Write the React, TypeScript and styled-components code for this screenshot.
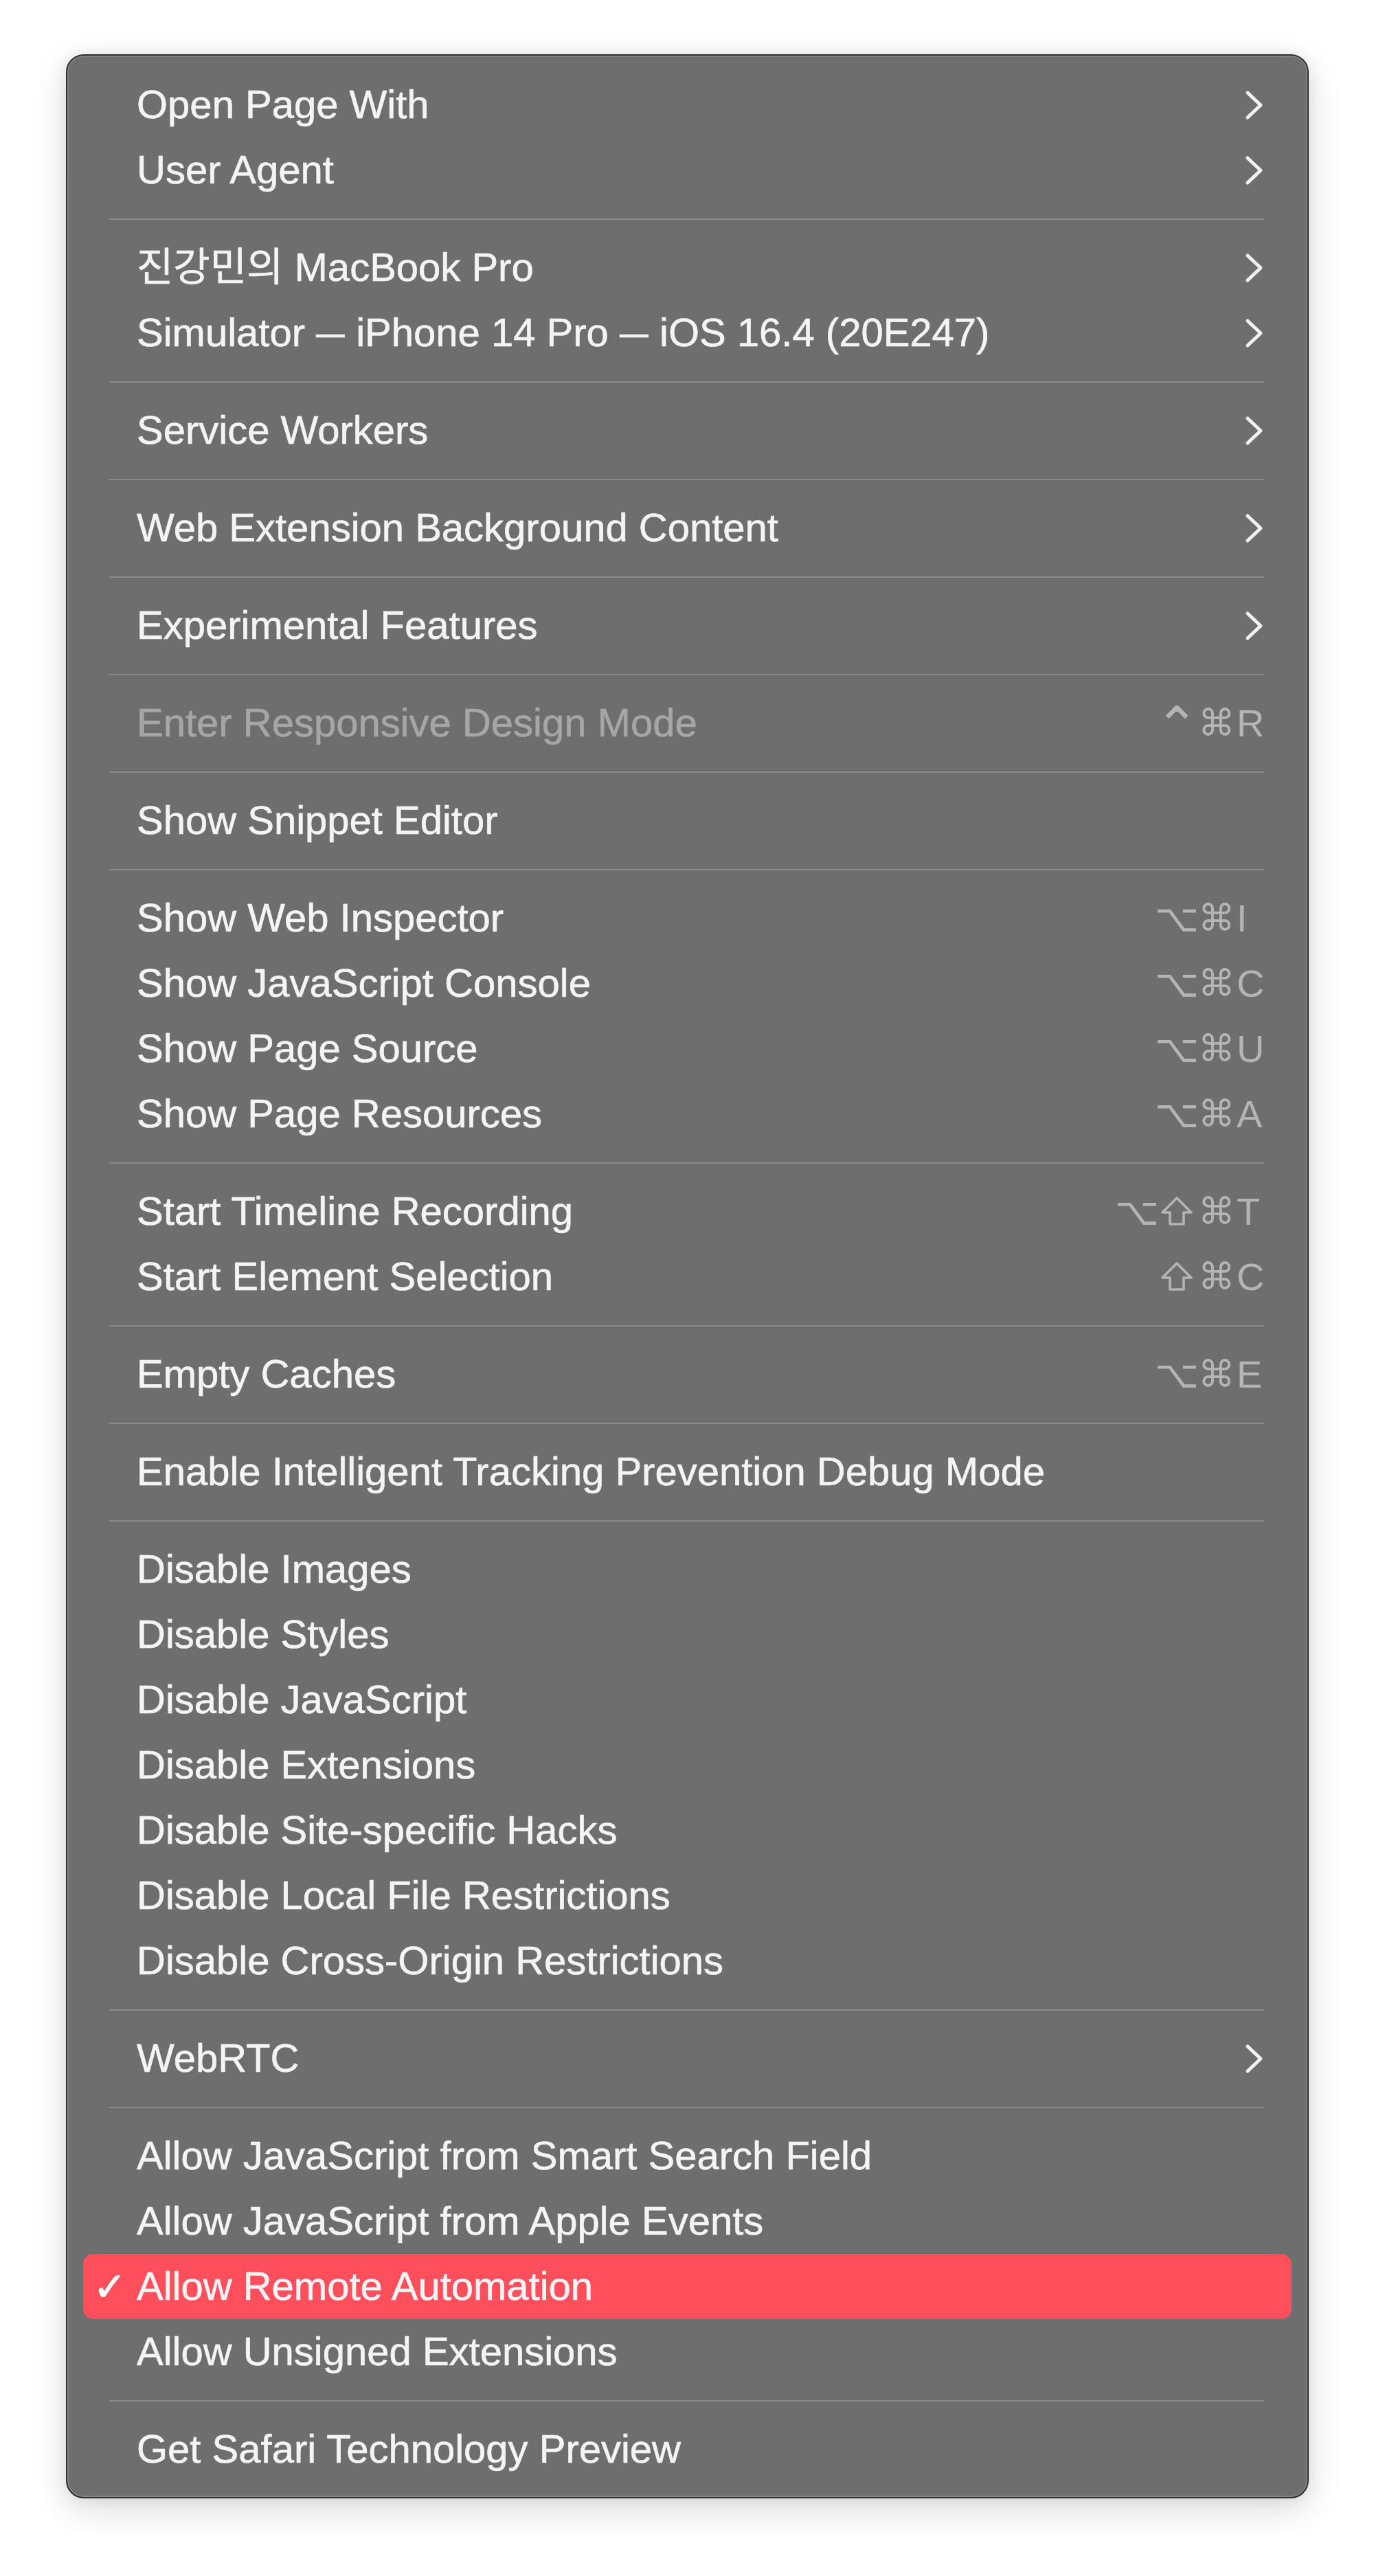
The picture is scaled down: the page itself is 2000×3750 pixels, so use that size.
import React from "react";
import styled, { createGlobalStyle } from "styled-components";

const GlobalStyle = createGlobalStyle`
  html, body {
    margin: 0;
    padding: 0;
    background: #ffffff;
  }
  body {
    font-family: "Liberation Sans", Arial, "Noto Sans CJK KR", sans-serif;
  }
`;

const Page = styled.div`
  padding: 79px 0 0 96px;
  min-height: 3750px;
  box-sizing: border-box;
`;

const Menu = styled.div`
  width: 1809px;
  box-sizing: border-box;
  background: #6e6e6e;
  border: 2px solid #2f2f2f;
  border-radius: 26px;
  padding: 24px 23px 22px;
  box-shadow: inset 0 0 0 1.5px #8b8b8b, 0 16px 50px rgba(0, 0, 0, 0.14),
    0 0 22px rgba(0, 0, 0, 0.07);
  display: flex;
  flex-direction: column;
`;

const Row = styled.div<{ $highlighted?: boolean }>`
  height: 95px;
  display: grid;
  grid-template-columns: 78px 1fr auto;
  align-items: center;
  padding-right: 40px;
  border-radius: 15px;
  background: ${(p) => (p.$highlighted ? "#ff4e5c" : "transparent")};
`;

const CheckCell = styled.span`
  text-align: right;
  padding-right: 15px;
  font-family: "DejaVu Sans", sans-serif;
  font-size: 58px;
  color: #ffffff;
  line-height: 1;
  -webkit-text-stroke: 1px #ffffff;
`;

const Label = styled.span<{ $disabled?: boolean }>`
  font-family: "Liberation Sans", Arial, "Noto Sans CJK KR", sans-serif;
  font-size: 58px;
  line-height: 1.15;
  color: ${(p) => (p.$disabled ? "#a6a6a6" : "#f4f4f4")};
  -webkit-text-stroke: 0.6px ${(p) => (p.$disabled ? "#a6a6a6" : "#f4f4f4")};
  white-space: nowrap;
`;

const Dash = styled.span`
  display: inline-block;
  width: 42px;
  transform: scaleX(0.72);
  transform-origin: left center;
`;

const Shortcut = styled.span`
  display: flex;
  align-items: center;
  color: #b4b4b4;
`;

const Mod = styled.span<{ $size: number; $shift: number }>`
  width: 58px;
  display: flex;
  justify-content: center;
  align-items: center;
  font-family: "DejaVu Sans", sans-serif;
  font-size: ${(p) => p.$size}px;
  line-height: 1;
  transform: translateY(${(p) => p.$shift}px);
`;

const ShiftGlyph = styled.svg`
  display: block;
  width: 48px;
  height: 44px;
`;

const Key = styled.span`
  width: 40px;
  text-align: left;
  font-family: "Liberation Sans", Arial, sans-serif;
  font-size: 56px;
  line-height: 1;
`;

const Chevron = styled.svg`
  display: block;
  width: 28px;
  height: 44px;
`;

const SeparatorWrap = styled.div`
  height: 47px;
  display: flex;
  align-items: center;
  padding: 0 40px 0 38px;
`;

const SeparatorLine = styled.div`
  height: 2px;
  flex: 1;
  background: #8a8a8a;
`;

type Item =
  | {
      label: string;
      submenu?: boolean;
      mods?: string[];
      keyChar?: string;
      disabled?: boolean;
      checked?: boolean;
    }
  | "sep";

const items: Item[] = [
  { label: "Open Page With", submenu: true },
  { label: "User Agent", submenu: true },
  "sep",
  { label: "진강민의 MacBook Pro", submenu: true },
  { label: "Simulator — iPhone 14 Pro — iOS 16.4 (20E247)", submenu: true },
  "sep",
  { label: "Service Workers", submenu: true },
  "sep",
  { label: "Web Extension Background Content", submenu: true },
  "sep",
  { label: "Experimental Features", submenu: true },
  "sep",
  { label: "Enter Responsive Design Mode", disabled: true, mods: ["⌃", "⌘"], keyChar: "R" },
  "sep",
  { label: "Show Snippet Editor" },
  "sep",
  { label: "Show Web Inspector", mods: ["⌥", "⌘"], keyChar: "I" },
  { label: "Show JavaScript Console", mods: ["⌥", "⌘"], keyChar: "C" },
  { label: "Show Page Source", mods: ["⌥", "⌘"], keyChar: "U" },
  { label: "Show Page Resources", mods: ["⌥", "⌘"], keyChar: "A" },
  "sep",
  { label: "Start Timeline Recording", mods: ["⌥", "⇧", "⌘"], keyChar: "T" },
  { label: "Start Element Selection", mods: ["⇧", "⌘"], keyChar: "C" },
  "sep",
  { label: "Empty Caches", mods: ["⌥", "⌘"], keyChar: "E" },
  "sep",
  { label: "Enable Intelligent Tracking Prevention Debug Mode" },
  "sep",
  { label: "Disable Images" },
  { label: "Disable Styles" },
  { label: "Disable JavaScript" },
  { label: "Disable Extensions" },
  { label: "Disable Site-specific Hacks" },
  { label: "Disable Local File Restrictions" },
  { label: "Disable Cross-Origin Restrictions" },
  "sep",
  { label: "WebRTC", submenu: true },
  "sep",
  { label: "Allow JavaScript from Smart Search Field" },
  { label: "Allow JavaScript from Apple Events" },
  { label: "Allow Remote Automation", checked: true },
  { label: "Allow Unsigned Extensions" },
  "sep",
  { label: "Get Safari Technology Preview" },
];

const modStyle: Record<string, { size: number; shift: number }> = {
  "⌃": { size: 76, shift: 4 },
  "⌘": { size: 54, shift: 0 },
  "⌥": { size: 56, shift: 0 },
  "⇧": { size: 56, shift: -1 },
};

const ChevronIcon = () => (
  <Chevron viewBox="0 0 28 44">
    <polyline
      points="4,4 23,22 4,40"
      fill="none"
      stroke="#f2f2f2"
      strokeWidth="5"
      strokeLinecap="round"
      strokeLinejoin="round"
    />
  </Chevron>
);

const ShiftIcon = () => (
  <ShiftGlyph viewBox="0 0 48 44" aria-label="⇧">
    <path
      d="M24 3 L45 24 L34 24 L34 41 L14 41 L14 24 L3 24 Z"
      fill="none"
      stroke="#b4b4b4"
      strokeWidth="3.6"
      strokeLinejoin="round"
    />
  </ShiftGlyph>
);

const renderLabel = (label: string) => {
  const parts = label.split("—");
  return parts.map((p, i) => (
    <React.Fragment key={i}>
      {p}
      {i < parts.length - 1 && <Dash>—</Dash>}
    </React.Fragment>
  ));
};

export default function App() {
  return (
    <>
      <GlobalStyle />
      <Page>
        <Menu>
          {items.map((it, i) => {
            if (it === "sep") {
              return (
                <SeparatorWrap key={i}>
                  <SeparatorLine />
                </SeparatorWrap>
              );
            }
            return (
              <Row key={i} $highlighted={it.checked}>
                <CheckCell>{it.checked ? "✓" : ""}</CheckCell>
                <Label $disabled={it.disabled}>{renderLabel(it.label)}</Label>
                {it.submenu ? (
                  <ChevronIcon />
                ) : it.keyChar ? (
                  <Shortcut>
                    {it.mods?.map((m, j) => (
                      <Mod key={j} $size={modStyle[m].size} $shift={modStyle[m].shift}>
                        {m === "⇧" ? <ShiftIcon /> : m}
                      </Mod>
                    ))}
                    <Key>{it.keyChar}</Key>
                  </Shortcut>
                ) : (
                  <span />
                )}
              </Row>
            );
          })}
        </Menu>
      </Page>
    </>
  );
}
